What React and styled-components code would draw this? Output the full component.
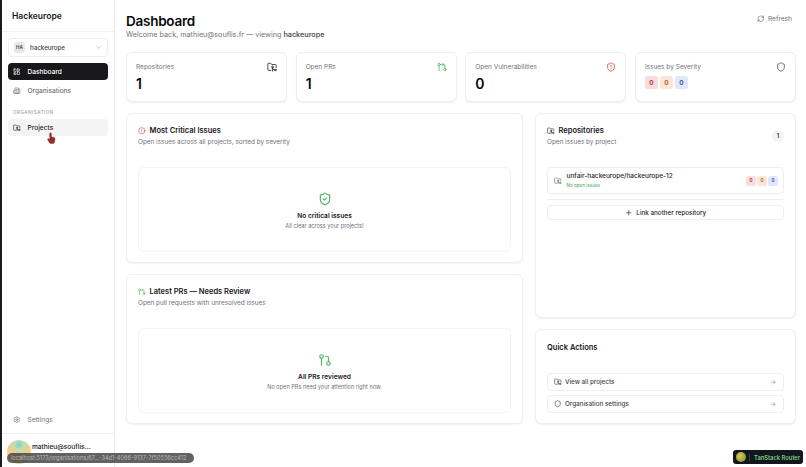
import React from 'react';
import styled, { createGlobalStyle } from 'styled-components';
import {
  ArrowRight, Building2, ChevronDown, ChevronsUpDown, CircleAlert, FolderGit2, GitPullRequest,
  GitPullRequestArrow, LayoutDashboard, Plus, RefreshCw, Settings, Shield, ShieldAlert, ShieldCheck,
} from 'lucide-react';

const GlobalStyle = createGlobalStyle`
  *, *::before, *::after { box-sizing: border-box; }
  html, body { margin: 0; height: 100%; background: #fff; }
  body { font-family: Inter, "Liberation Sans", sans-serif; color: #18181b; overflow: hidden; }
  p, h1, h2 { margin: 0; }
`;

const Page = styled.div`
  width: 806px;
  height: 467px;
  display: flex;
  position: relative;
  overflow: hidden;
  background: #fff;
`;

const Sidebar = styled.aside`
  width: 115px;
  flex: none;
  border-left: 2px solid #1b1b1d;
  border-right: 1px solid #ececee;
  display: flex;
  flex-direction: column;
`;

const Brand = styled.div`
  height: 32px;
  padding: 0 0 0 10px;
  display: flex;
  align-items: center;
  font-size: 8.5px;
  font-weight: 600;
  border-bottom: 1px solid #f0f0f2;
`;

const Nav = styled.nav`
  flex: 1;
  padding: 6px 6px 0;
  display: flex;
  flex-direction: column;
`;

const OrgSelect = styled.div`
  height: 19px;
  border: 1px solid #eeeef0;
  border-radius: 4px;
  display: flex;
  align-items: center;
  gap: 5px;
  padding: 0 5px 0 5px;
  margin-bottom: 6px;
  font-size: 6.2px;
  font-weight: 500;
  color: #3f3f46;
  svg { margin-left: auto; color: #a1a1aa; }
`;

const Avatar = styled.span`
  width: 11px;
  height: 11px;
  border-radius: 3px;
  background: #e8e8ea;
  font-size: 4.6px;
  font-weight: 600;
  display: grid;
  place-items: center;
`;

const NavItem = styled.div`
  height: 17px;
  margin-bottom: ${p => (p.$gap ? 2 : 2)}px;
  border-radius: 4px;
  padding: 0 5px;
  display: flex;
  align-items: center;
  gap: 7px;
  font-size: 6.6px;
  font-weight: 500;
  color: ${p => (p.$active ? '#fff' : p.$hover ? '#27272a' : '#71717a')};
  background: ${p => (p.$active ? '#18181b' : p.$hover ? '#f4f4f5' : 'transparent')};
`;

const NavLabel = styled.p`
  font-size: 4.6px;
  letter-spacing: 0.5px;
  font-weight: 500;
  color: #a1a1aa;
  padding: 9px 0 4px 5px;
`;

const SettingsRow = styled.div`
  height: 28px;
  padding: 0 11px 0 11px;
  display: flex;
  align-items: center;
  gap: 7px;
  font-size: 6.6px;
  color: #71717a;
  border-bottom: 1px solid #f0f0f2;
`;

const UserRow = styled.div`
  height: 33px;
  padding: 6px 8px 0 5px;
  display: flex;
  gap: 1px;
  font-size: 6.6px;
  font-weight: 500;
  svg { color: #a1a1aa; margin-top: 12px; margin-left: 3px; flex: none; }
`;

const UserPic = styled.span`
  width: 24px;
  height: 24px;
  flex: none;
  border-radius: 50%;
  background: radial-gradient(circle at 50% 20%, #7fd0cf 0%, #bfe0b8 22%, #f2c98a 42%, #f2dc86 68%, #bcd27a 100%);
`;

const UserName = styled.span`
  margin-top: 3px;
  white-space: nowrap;
`;

const Main = styled.main`
  flex: 1;
  padding: 14px 10px 0 11px;
  min-width: 0;
`;

const Header = styled.header`
  display: flex;
  justify-content: space-between;
  align-items: flex-start;
  height: 38px;
`;

const Title = styled.h1`
  font-size: 13.5px;
  line-height: 15px;
  font-weight: 600;
  letter-spacing: -0.25px;
  color: #09090b;
`;

const Subtitle = styled.p`
  font-size: 7.2px;
  line-height: 10px;
  margin-top: 1px;
  color: #71717a;
  b { font-weight: 600; color: #52525b; }
`;

const Refresh = styled.div`
  display: flex;
  align-items: center;
  gap: 3px;
  font-size: 6.6px;
  color: #71717a;
  padding: 1px 4px 0 0;
`;

const Stats = styled.section`
  display: grid;
  grid-template-columns: repeat(4, 1fr);
  gap: 8.5px;
  margin-bottom: 11px;
`;

const Card = styled.div`
  background: #fff;
  border: 1px solid #efeff1;
  border-radius: 6px;
  box-shadow: 0 1px 2px rgba(0, 0, 0, 0.06);
`;

const StatCard = styled(Card)`
  height: 50px;
  padding: 9px 9px 0 9px;
`;

const StatTop = styled.div`
  display: flex;
  justify-content: space-between;
  align-items: center;
  font-size: 6.5px;
  color: #71717a;
  height: 10px;
`;

const StatValue = styled.p`
  font-size: 14px;
  line-height: 18px;
  margin-top: 3px;
  font-weight: 600;
  color: #09090b;
`;

const Badges = styled.div`
  display: flex;
  gap: ${p => (p.$small ? 1 : 2)}px;
  margin-top: ${p => p.$top || 0}px;
`;

const toneBg = { red: '#fbdcdc', orange: '#fbe5d6', blue: '#dfe7fb' };
const toneFg = { red: '#b42323', orange: '#b4541a', blue: '#2f46c0' };

const Badge = styled.span`
  width: ${p => (p.$small ? 10 : 13)}px;
  height: ${p => (p.$small ? 10 : 13)}px;
  border-radius: 2.5px;
  display: grid;
  place-items: center;
  font-size: ${p => (p.$small ? 4.5 : 6.5)}px;
  font-weight: 600;
  background: ${p => toneBg[p.$tone]};
  color: ${p => toneFg[p.$tone]};
`;

const Columns = styled.section`
  display: grid;
  grid-template-columns: 397px 261px;
  gap: 11px 12px;
`;

const Column = styled.div`
  display: flex;
  flex-direction: column;
  gap: 11px;
`;

const Panel = styled(Card)`
  height: ${p => p.$h}px;
  padding: ${p => p.$top || 11}px 11px 0;
`;

const PanelTitle = styled.h2`
  font-size: 7.5px;
  line-height: 11px;
  font-weight: 600;
  color: #18181b;
  display: flex;
  align-items: center;
  gap: 4px;
`;

const PanelSub = styled.p`
  font-size: 6.4px;
  line-height: 10px;
  margin-top: 1px;
  color: #71717a;
`;

const Empty = styled.div`
  height: 85px;
  margin-top: 20px;
  border: 1px solid #f3f3f5;
  border-radius: 6px;
  display: flex;
  flex-direction: column;
  align-items: center;
  justify-content: center;
  padding-top: 2px;
`;

const EmptyTitle = styled.p`
  font-size: 6.6px;
  font-weight: 600;
  margin-top: 6px;
  line-height: 9px;
`;

const EmptySub = styled.p`
  font-size: 5.6px;
  color: #71717a;
  margin-top: 1px;
  line-height: 8px;
`;

const PanelHead = styled.div`
  display: flex;
  justify-content: space-between;
  align-items: center;
`;

const Count = styled.span`
  width: 12px;
  height: 12px;
  border-radius: 50%;
  background: #f4f4f5;
  display: grid;
  place-items: center;
  font-size: 5.6px;
  font-weight: 600;
`;

const RepoRow = styled.div`
  height: 27px;
  margin-top: 20px;
  border: 1px solid #efeff1;
  border-radius: 4px;
  display: flex;
  align-items: center;
  gap: 5px;
  padding: 0 5px 0 6px;
  color: #71717a;
`;

const RepoName = styled.p`
  font-size: 6.5px;
  line-height: 9px;
  font-weight: 500;
  color: #27272a;
`;

const RepoStatus = styled.p`
  font-size: 4.6px;
  line-height: 7px;
  color: #3aa655;
  margin-top: 1px;
`;

const RepoInfo = styled.div`
  flex: 1;
  margin-top: -1px;
`;

const Divider = styled.hr`
  border: 0;
  border-top: 1px solid #f0f0f2;
  margin: 5px 0;
`;

const WideButton = styled.div`
  height: 15px;
  border: 1px solid #efeff1;
  border-radius: 4px;
  display: flex;
  align-items: center;
  justify-content: center;
  gap: 4px;
  font-size: 6.3px;
  font-weight: 500;
  color: #27272a;
`;

const ActionList = styled.div`
  margin-top: 20px;
  display: flex;
  flex-direction: column;
  gap: 4px;
`;

const Action = styled.div`
  height: 18px;
  border: 1px solid #efeff1;
  border-radius: 4px;
  padding: 0 7px 0 6px;
  display: flex;
  align-items: center;
  gap: 3.5px;
  font-size: 6.3px;
  font-weight: 500;
  color: #3f3f46;
  svg:last-child { margin-left: auto; color: #8a8a90; }
`;

const StatusBar = styled.div`
  position: absolute;
  left: 7px;
  top: 453px;
  height: 10px;
  width: 187px;
  border-radius: 5px;
  background: rgba(70, 70, 70, 0.85);
  color: #b8b8b8;
  font-size: 5.6px;
  line-height: 10px;
  padding-left: 4px;
  white-space: nowrap;
`;

const RouterBadge = styled.div`
  position: absolute;
  left: 733px;
  top: 450px;
  width: 70px;
  height: 14px;
  border-radius: 3px;
  background: #12171f;
  display: flex;
  align-items: center;
  padding-left: 3px;
  font-size: 5.8px;
  font-weight: 600;
  color: #7fc77f;
  white-space: nowrap;
`;

const RouterLogo = styled.span`
  width: 10px;
  height: 10px;
  border-radius: 50%;
  background: radial-gradient(circle at 40% 40%, #e2c34e, #6d8f3a);
  margin-right: 3px;
`;

const RouterName = styled.span`
  border-left: 1px solid #3a3f47;
  padding-left: 4px;
`;

const Cursor = styled.svg`
  position: absolute;
  left: 47px;
  top: 132px;
`;

const stats = [
  { label: 'Repositories', value: 1, icon: <FolderGit2 size={10} color="#27272a" /> },
  { label: 'Open PRs', value: 1, icon: <GitPullRequestArrow size={10} color="#55b96b" /> },
  { label: 'Open Vulnerabilities', value: 0, icon: <ShieldAlert size={10} color="#dc4a4a" /> },
];

const Severity = ({ small, top }) => (
  <Badges $small={small} $top={top}>
    <Badge $small={small} $tone="red">0</Badge>
    <Badge $small={small} $tone="orange">0</Badge>
    <Badge $small={small} $tone="blue">0</Badge>
  </Badges>
);

export default function App() {
  return (
    <Page>
      <GlobalStyle />
      <Sidebar>
        <Brand>Hackeurope</Brand>
        <Nav>
          <OrgSelect>
            <Avatar>HA</Avatar>
            hackeurope
            <ChevronDown size={7} />
          </OrgSelect>
          <NavItem $active><LayoutDashboard size={7.5} />Dashboard</NavItem>
          <NavItem $gap><Building2 size={7.5} />Organisations</NavItem>
          <NavLabel>ORGANISATION</NavLabel>
          <NavItem $hover><FolderGit2 size={7.5} />Projects</NavItem>
        </Nav>
        <SettingsRow><Settings size={7.5} />Settings</SettingsRow>
        <UserRow>
          <UserPic />
          <UserName>mathieu@souflis...</UserName>
          <ChevronsUpDown size={7} />
        </UserRow>
      </Sidebar>

      <Main>
        <Header>
          <div>
            <Title>Dashboard</Title>
            <Subtitle>Welcome back, mathieu@souflis.fr — viewing <b>hackeurope</b></Subtitle>
          </div>
          <Refresh><RefreshCw size={7.5} />Refresh</Refresh>
        </Header>

        <Stats>
          {stats.map(s => (
            <StatCard key={s.label}>
              <StatTop>{s.label}{s.icon}</StatTop>
              <StatValue>{s.value}</StatValue>
            </StatCard>
          ))}
          <StatCard>
            <StatTop>Issues by Severity<Shield size={10} color="#52525b" /></StatTop>
            <Severity top={4} />
          </StatCard>
        </Stats>

        <Columns>
          <Column>
            <Panel $h={150}>
              <PanelTitle><CircleAlert size={7.5} color="#dc4a4a" />Most Critical Issues</PanelTitle>
              <PanelSub>Open issues across all projects, sorted by severity</PanelSub>
              <Empty>
                <ShieldCheck size={14} color="#4fb767" />
                <EmptyTitle>No critical issues</EmptyTitle>
                <EmptySub>All clear across your projects!</EmptySub>
              </Empty>
            </Panel>
            <Panel $h={150}>
              <PanelTitle><GitPullRequestArrow size={7.5} color="#55b96b" />Latest PRs — Needs Review</PanelTitle>
              <PanelSub>Open pull requests with unresolved issues</PanelSub>
              <Empty>
                <GitPullRequest size={14} color="#4fb767" />
                <EmptyTitle>All PRs reviewed</EmptyTitle>
                <EmptySub>No open PRs need your attention right now.</EmptySub>
              </Empty>
            </Panel>
          </Column>
          <Column>
            <Panel $h={205}>
              <PanelHead>
                <div>
                  <PanelTitle><FolderGit2 size={7.5} color="#27272a" />Repositories</PanelTitle>
                  <PanelSub>Open issues by project</PanelSub>
                </div>
                <Count>1</Count>
              </PanelHead>
              <RepoRow>
                <FolderGit2 size={7.5} />
                <RepoInfo>
                  <RepoName>unfair-hackeurope/hackeurope-12</RepoName>
                  <RepoStatus>No open issues</RepoStatus>
                </RepoInfo>
                <Severity small />
              </RepoRow>
              <Divider />
              <WideButton><Plus size={7.5} />Link another repository</WideButton>
            </Panel>
            <Panel $h={95} $top={12}>
              <PanelTitle>Quick Actions</PanelTitle>
              <ActionList>
                <Action><FolderGit2 size={7.5} />View all projects<ArrowRight size={6.5} /></Action>
                <Action><Shield size={7.5} />Organisation settings<ArrowRight size={6.5} /></Action>
              </ActionList>
            </Panel>
          </Column>
        </Columns>
      </Main>

      <Cursor width="9" height="12" viewBox="0 0 9 12">
        <path d="M3 1c.8-.5 1.3 0 1.3.8v3l2.5.6c.9.2 1.4.9 1.2 1.8L7.4 10.5c-.1.5-.5.9-1 .9H3.6c-.4 0-.7-.2-.9-.5L.7 7.7c-.4-.7.5-1.4 1.1-.8l.9.9V1.8c0-.3.1-.6.3-.8z" fill="#a02a22" stroke="#6e1c16" strokeWidth="0.4" />
      </Cursor>
      <StatusBar>localhost:5173/organisations/67...-34d1-4066-9137-7f50556cc412</StatusBar>
      <RouterBadge><RouterLogo /><RouterName>TanStack Router</RouterName></RouterBadge>
    </Page>
  );
}
